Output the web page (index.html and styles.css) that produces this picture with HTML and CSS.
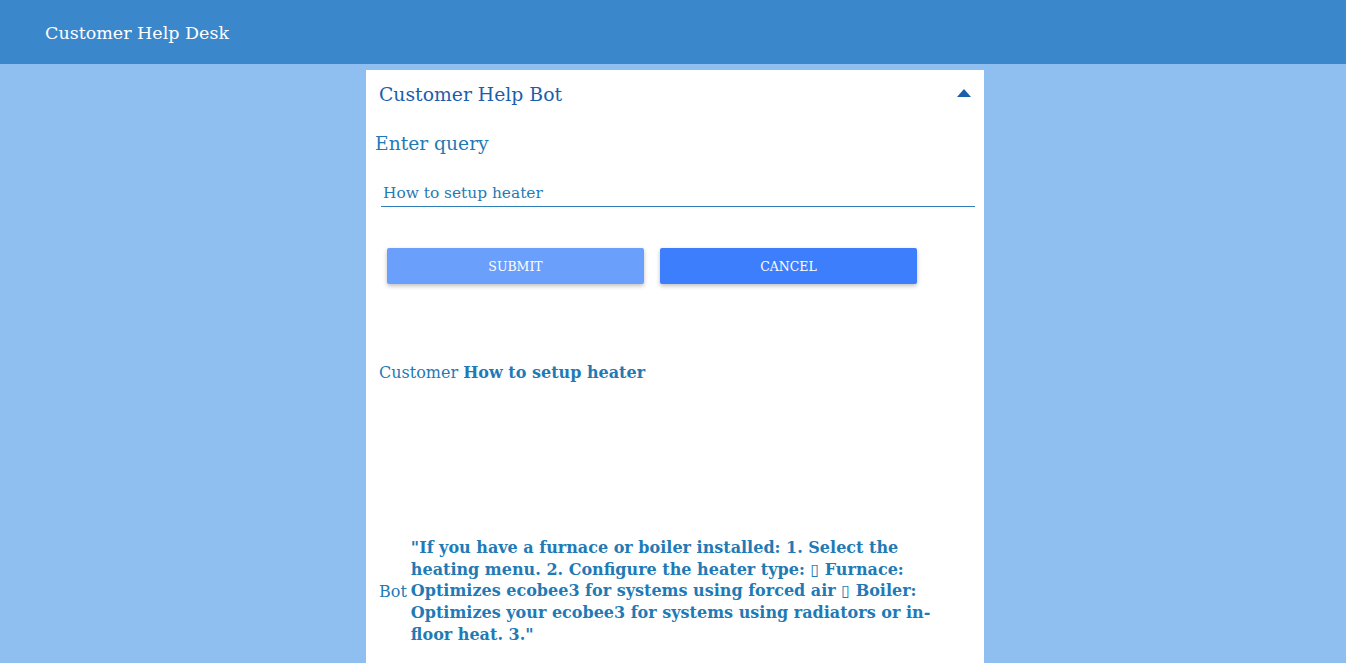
FILE: index.html
```html
<!DOCTYPE html>
<html>
<head>
<meta charset="utf-8">
<link rel="stylesheet" href="styles.css">
</head>
<body>
<header class="topbar"><span class="brand">Customer Help Desk</span></header>
<main class="page">
  <section class="card">
    <div class="card-head">
      <span class="card-title">Customer Help Bot</span>
      <svg class="caret" width="14" height="8" viewBox="0 0 14 8"><path d="M0 8 L7 0 L14 8 Z" fill="#1b5eac"/></svg>
    </div>
    <div class="label">Enter query</div>
    <div class="field"><span class="field-text">How to setup heater</span></div>
    <div class="buttons">
      <button class="btn btn-submit">SUBMIT</button>
      <button class="btn btn-cancel">CANCEL</button>
    </div>
    <div class="msg msg-customer"><span class="who">Customer</span> <b class="said">How to setup heater</b></div>
    <div class="msg msg-bot">
      <span class="who">Bot</span>
      <b class="said answer">"If you have a furnace or boiler installed: 1. Select the heating menu. 2. Configure the heater type: &#x25AF; Furnace: Optimizes ecobee3 for systems using forced air &#x25AF; Boiler: Optimizes your ecobee3 for systems using radiators or in-floor heat. 3."</b>
    </div>
  </section>
</main>
</body>
</html>
```
FILE: styles.css
```css
* { box-sizing: border-box; }
html, body { margin: 0; padding: 0; }
body {
  background: #8fbef0;
  font-family: "DejaVu Serif", serif;
  height: 663px;
  overflow: hidden;
}
.topbar {
  height: 64px;
  background: #3b87cb;
  display: flex;
  align-items: center;
  padding-left: 45px;
}
.brand {
  color: #ffffff;
  font-size: 17.5px;
  padding-top: 1px;
}
.page {
  display: flex;
  justify-content: center;
  padding-top: 6px;
}
.card {
  width: 618px;
  margin-left: 4px;
  background: #ffffff;
  min-height: 620px;
  padding: 0 9px 0 9px;
  display: flex;
  flex-direction: column;
}
.card-head {
  height: 48px;
  display: flex;
  align-items: center;
  justify-content: space-between;
  padding-left: 4px;
  padding-right: 4px;
}
.card-title {
  color: #1b5eac;
  font-size: 18.8px;
}
.caret { margin-top: -3px; }
.label {
  color: #1f7ab5;
  font-size: 18.7px;
  margin-top: 12px;
  line-height: 28px;
}
.field {
  margin: 19px 0 0 6px;
  border-bottom: 1px solid #2f7fb9;
  height: 30px;
  padding-left: 2px;
  padding-top: 2px;
  display: flex;
  align-items: center;
}
.field-text {
  color: #1f7ab5;
  font-size: 15.4px;
}
.buttons {
  display: flex;
  gap: 16px;
  margin: 41px 0 0 12px;
}
.btn {
  width: 257px;
  height: 36px;
  border: none;
  border-radius: 2px;
  color: #ffffff;
  font-family: "DejaVu Serif", serif;
  font-size: 12.5px;
  box-shadow: 0 2px 4px rgba(0,0,0,0.25);
}
.btn-submit { background: #6a9ffc; }
.btn-cancel { background: #3d7efd; }
.msg {
  color: #1f7ab5;
  font-size: 16px;
}
.msg-customer {
  margin: 79px 0 0 4px;
}
.said { font-weight: bold; }
.msg-bot {
  margin-top: 155px;
  display: flex;
  align-items: center;
  gap: 4px;
  padding-left: 4px;
}
.answer {
  width: 545px;
  line-height: 21.7px;
}
```
